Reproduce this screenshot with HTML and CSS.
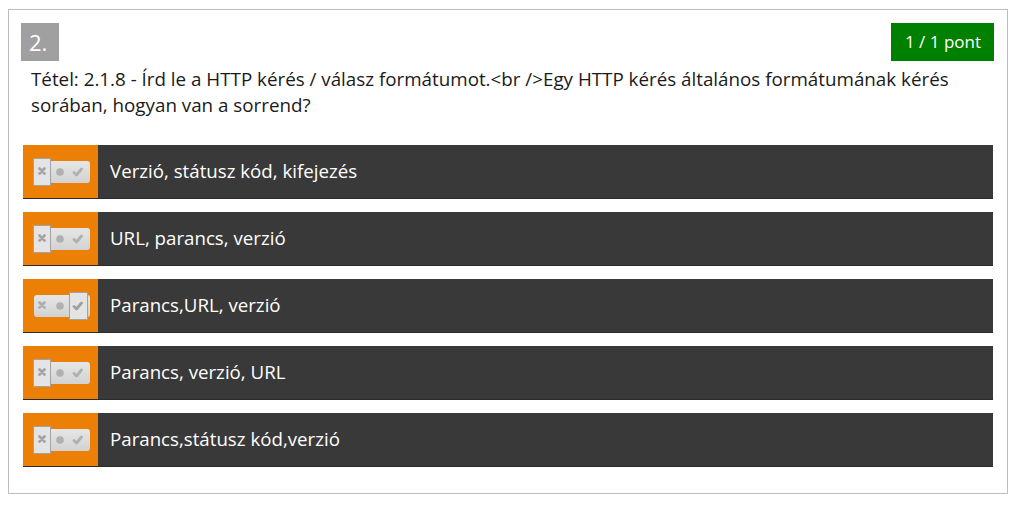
FILE: index.html
```html
<!DOCTYPE html>
<html lang="hu">
<head>
<meta charset="utf-8">
<link rel="stylesheet" href="styles.css">
</head>
<body>
<svg width="0" height="0" class="defs">
  <defs>
    <linearGradient id="pillg" x1="0" y1="0" x2="0" y2="1">
      <stop offset="0" stop-color="#e6e6e6"/>
      <stop offset="1" stop-color="#d2d2d2"/>
    </linearGradient>
    <symbol id="marks" viewBox="0 0 58 30">
      <rect x="1" y="4" width="56" height="22" rx="3" fill="url(#pillg)"/>
      <path d="M6.5 11.5 L11.5 16.5 M11.5 11.5 L6.5 16.5" stroke="#aeaeae" stroke-width="2.8" stroke-linecap="round"/>
      <circle cx="27" cy="15" r="3.8" fill="#b0b0b0"/>
      <path d="M41 15.5 L43.5 18 L48.5 12" stroke="#b0b0b0" stroke-width="2.8" fill="none" stroke-linecap="round" stroke-linejoin="round"/>
    </symbol>
  </defs>
</svg>
<div class="card">
  <div class="head">
    <div class="num">2.</div>
    <div class="score">1 / 1 pont</div>
  </div>
  <p class="question">Tétel: 2.1.8 - Írd le a HTTP kérés / válasz formátumot.&lt;br /&gt;Egy HTTP kérés általános formátumának kérés sorában, hogyan van a sorrend?</p>
  <ul class="answers">
    <li class="answer">
      <div class="mark">
        <svg class="tog" viewBox="0 0 58 30" width="58" height="30"><use href="#marks"/><rect class="sel" x="0.5" y="1.5" width="17" height="27"/><path d="M6.5 11.5 L11.5 16.5 M11.5 11.5 L6.5 16.5" stroke="#a4a4a4" stroke-width="2.8" stroke-linecap="round"/></svg>
      </div>
      <div class="label">Verzió, státusz kód, kifejezés</div>
    </li>
    <li class="answer">
      <div class="mark">
        <svg class="tog" viewBox="0 0 58 30" width="58" height="30"><use href="#marks"/><rect class="sel" x="0.5" y="1.5" width="17" height="27"/><path d="M6.5 11.5 L11.5 16.5 M11.5 11.5 L6.5 16.5" stroke="#a4a4a4" stroke-width="2.8" stroke-linecap="round"/></svg>
      </div>
      <div class="label">URL, parancs, verzió</div>
    </li>
    <li class="answer">
      <div class="mark">
        <svg class="tog" viewBox="0 0 58 30" width="58" height="30"><use href="#marks"/><rect class="sel" x="36.5" y="1.5" width="18" height="27"/><path d="M41 15.5 L43.5 18 L48.5 12" stroke="#a0a0a0" stroke-width="2.8" fill="none" stroke-linecap="round" stroke-linejoin="round"/></svg>
      </div>
      <div class="label">Parancs,URL, verzió</div>
    </li>
    <li class="answer">
      <div class="mark">
        <svg class="tog" viewBox="0 0 58 30" width="58" height="30"><use href="#marks"/><rect class="sel" x="0.5" y="1.5" width="17" height="27"/><path d="M6.5 11.5 L11.5 16.5 M11.5 11.5 L6.5 16.5" stroke="#a4a4a4" stroke-width="2.8" stroke-linecap="round"/></svg>
      </div>
      <div class="label">Parancs, verzió, URL</div>
    </li>
    <li class="answer">
      <div class="mark">
        <svg class="tog" viewBox="0 0 58 30" width="58" height="30"><use href="#marks"/><rect class="sel" x="0.5" y="1.5" width="17" height="27"/><path d="M6.5 11.5 L11.5 16.5 M11.5 11.5 L6.5 16.5" stroke="#a4a4a4" stroke-width="2.8" stroke-linecap="round"/></svg>
      </div>
      <div class="label">Parancs,státusz kód,verzió</div>
    </li>
  </ul>
</div>
</body>
</html>
```

FILE: styles.css
```css
html, body {
  margin: 0;
  padding: 0;
  background: #ffffff;
}
body {
  padding: 9px 8px;
  font-family: "Open Sans", "Liberation Sans", sans-serif;
}
.defs {
  position: absolute;
  width: 0;
  height: 0;
}
.card {
  box-sizing: border-box;
  width: 1000px;
  border: 1px solid #bdbdbd;
  padding: 13px 14px 26px 14px;
}
.head {
  display: flex;
  justify-content: space-between;
  align-items: flex-start;
  margin: 0 -1px 0 -2px;
}
.num {
  width: 38px;
  height: 38px;
  box-sizing: border-box;
  background: #a0a0a0;
  color: #ffffff;
  font-size: 22px;
  line-height: 38px;
  padding-left: 8px;
}
.score {
  height: 38px;
  box-sizing: border-box;
  background: #008000;
  color: #ffffff;
  font-size: 17px;
  line-height: 38px;
  padding: 0 13px 0 14px;
}
.question {
  margin: 5px 0 27px 0;
  padding: 0 8px;
  font-size: 18.8px;
  line-height: 26px;
  color: #1a1a1a;
}
.answers {
  list-style: none;
  margin: 0;
  padding: 0;
  display: flex;
  flex-direction: column;
  gap: 13px;
}
.answer {
  display: flex;
  height: 54px;
  box-sizing: border-box;
  background: #393939;
  border-bottom: 1px solid #2a2a2a;
}
.mark {
  width: 75px;
  flex: none;
  background: #ec7f05;
  display: flex;
  align-items: center;
  padding-left: 10px;
  box-sizing: border-box;
}
.tog {
  display: block;
}
.sel {
  fill: #e4e4e4;
  stroke: #a2a2a2;
  stroke-width: 1;
}
.label {
  display: flex;
  align-items: center;
  padding-left: 12px;
  padding-bottom: 2px;
  color: #ffffff;
  font-size: 18.7px;
}
```
